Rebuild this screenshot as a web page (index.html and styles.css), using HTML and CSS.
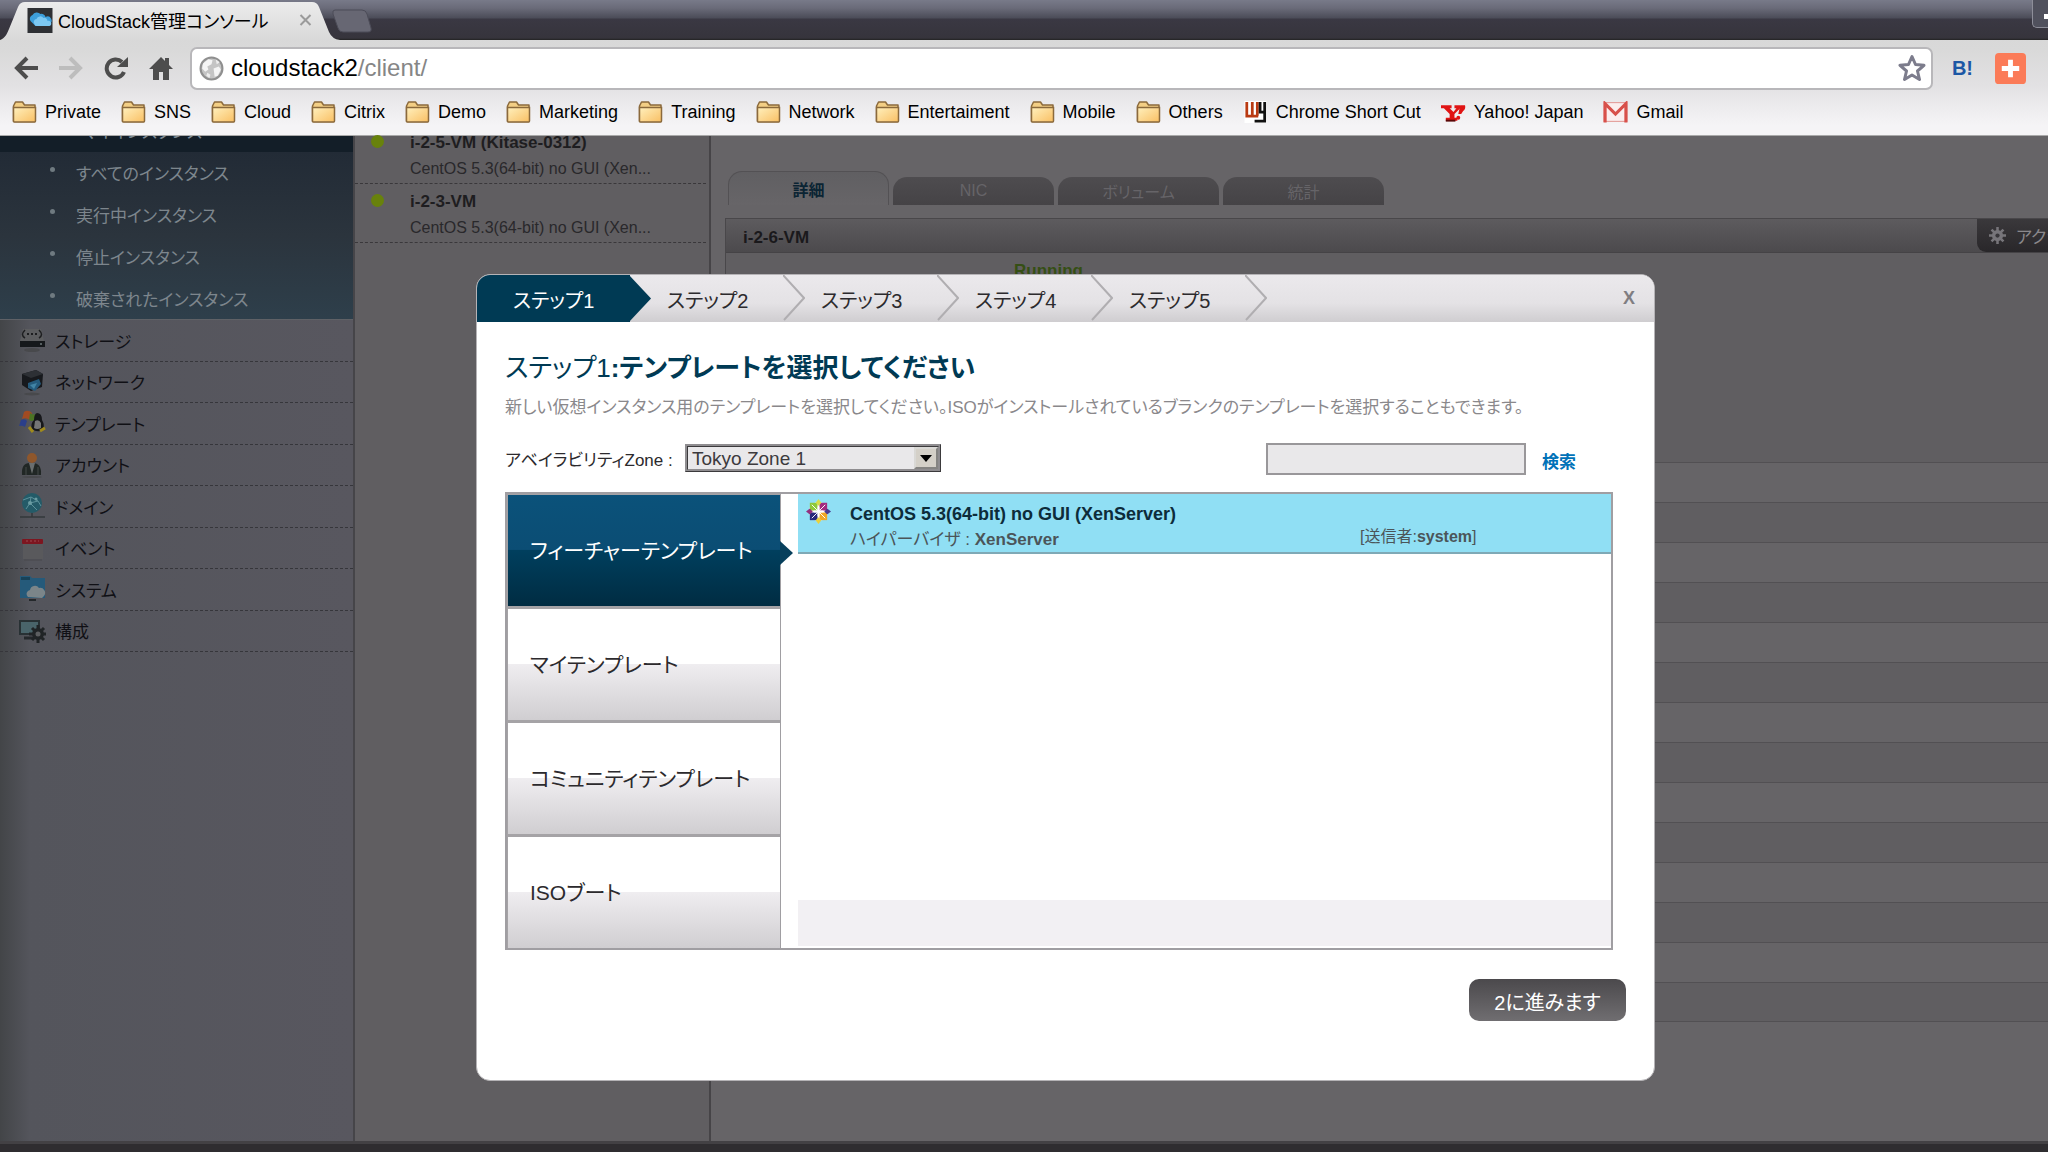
FILE: index.html
```
<!DOCTYPE html>
<html lang="ja">
<head>
    <meta charset="UTF-8">
    <meta name="viewport" content="width=device-width, initial-scale=1.0">
    <title>CloudStack管理コンソール</title>
    <link rel="stylesheet" href="styles.css">
</head>
<body>
    <!-- Shared icons -->
    <svg class="defs" width="0" height="0">
        <defs>
            <linearGradient id="folderFill" x1="0" y1="0" x2="1" y2="1">
                <stop offset="0" stop-color="#fff0bd"/>
                <stop offset="1" stop-color="#f9bf63"/>
            </linearGradient>
            <linearGradient id="tabFill" x1="0" y1="0" x2="0" y2="1">
                <stop offset="0" stop-color="#ececec"/>
                <stop offset="1" stop-color="#d9d9d9"/>
            </linearGradient>
            <symbol id="folder" viewBox="0 0 24 22">
                <path d="M1 20V5l2-4h7l2 3h10.500v16.500H1z" fill="#f3cf85" stroke="#8b6a3c" stroke-width="1.500" stroke-linejoin="round"/>
                <path d="M1 6.500h22V20a1 1 0 0 1-1 1H2a1 1 0 0 1-1-1z" fill="url(#folderFill)" stroke="#8b6a3c" stroke-width="1.500"/>
            </symbol>
        </defs>
    </svg>

    <div class="browser">
        <div class="title-bar">
            <div class="tab">
                <svg class="tab-shape" viewBox="0 0 340 40" preserveAspectRatio="none">
                    <path d="M0 40C5 38 7 34 9 29L18 7Q20 2 25 2H312Q317 2 319 7L329 32Q332 39 340 40z" fill="url(#tabFill)"/>
                </svg>
                <svg class="favicon" viewBox="0 0 25 25">
                    <rect width="25" height="25" fill="#2e3034"/>
                    <path d="M3 13a4 4 0 0 1 2-6 5 5 0 0 1 8-1 4 4 0 0 1 5 3 4 4 0 0 1 4 7l-6 2H8z" fill="#3d9fdb"/>
                    <path d="M7 16a3 3 0 0 1 2-5 4 4 0 0 1 7-1 3 3 0 0 1 4 3 2.500 2.500 0 0 1 2 5H9a2 2 0 0 1-2-2z" fill="#7cc8f2"/>
                </svg>
                <span class="tab-title">CloudStack管理コンソール</span>
                <button class="tab-close" aria-label="タブを閉じる">
                    <svg viewBox="0 0 12 12"><path d="M1 1l10 10M11 1L1 11" stroke="#9a9a9a" stroke-width="2"/></svg>
                </button>
            </div>
            <button class="new-tab" aria-label="新しいタブ">
                <svg viewBox="0 0 40 24"><path d="M3 1h27q4 0 5 4l4 14q1 4-3 4H11q-4 0-5-4L1 5q-1-4 2-4z" fill="#676773" stroke="#4c4c58"/></svg>
            </button>
            <button class="window-button" aria-label="最小化"></button>
        </div>

        <div class="toolbar">
            <div class="nav-buttons">
                <button aria-label="戻る">
                    <svg viewBox="0 0 24 24"><path d="M13 2L3 12l10 10M4 12h20" fill="none" stroke="#4d4d4d" stroke-width="4"/></svg>
                </button>
                <button aria-label="進む">
                    <svg viewBox="0 0 24 24"><path d="M11 2l10 10-10 10M0 12h20" fill="none" stroke="#bdbdbd" stroke-width="4"/></svg>
                </button>
                <button aria-label="再読み込み">
                    <svg viewBox="0 0 24 24"><path d="M20 16a9 9 0 1 1-2-10" fill="none" stroke="#4d4d4d" stroke-width="4"/><path d="M24 1v10H13z" fill="#4d4d4d"/></svg>
                </button>
                <button aria-label="ホーム">
                    <svg viewBox="0 0 24 24"><path d="M12 1L0 13h4v11h6v-8h4v8h6V13h4l-4-4V2h-4v3z" fill="#4d4d4d"/></svg>
                </button>
            </div>
            <div class="address-bar">
                <svg class="globe" viewBox="0 0 24 24">
                    <circle cx="12" cy="12" r="10.500" fill="#c4c4c4" stroke="#8f8f8f" stroke-width="2"/>
                    <path d="M4 7l5-4 4 1-1 4-4 2 1 3-3 2-3-3zM14 12l5-2 2 3-3 6-3 1z" fill="#f4f4f4"/>
                    <path d="M16 3l4 3-3 2zM8 16l3 2-1 3-3-2z" fill="#ededed"/>
                </svg>
                <span class="url">cloudstack2<span class="url-path">/client/</span></span>
                <svg class="star" viewBox="0 0 28 28">
                    <path d="M14 2.500l3.500 8 8.500.8-6.500 5.700 2 8.500-7.500-4.500-7.500 4.500 2-8.500L2 11.300l8.500-.8z" fill="#fff" stroke="#7c7c8c" stroke-width="3" stroke-linejoin="round"/>
                </svg>
            </div>
            <button class="ext-hatena" aria-label="はてなブックマーク">B!</button>
            <button class="ext-plus" aria-label="追加">
                <svg viewBox="0 0 32 32"><rect width="32" height="32" rx="4" fill="#fb7b58"/><path d="M16 7v18M7 16h18" stroke="#fff" stroke-width="5"/></svg>
            </button>
        </div>

        <div class="bookmarks">
            <a href="#"><svg><use href="#folder"/></svg>Private</a>
            <a href="#"><svg><use href="#folder"/></svg>SNS</a>
            <a href="#"><svg><use href="#folder"/></svg>Cloud</a>
            <a href="#"><svg><use href="#folder"/></svg>Citrix</a>
            <a href="#"><svg><use href="#folder"/></svg>Demo</a>
            <a href="#"><svg><use href="#folder"/></svg>Marketing</a>
            <a href="#"><svg><use href="#folder"/></svg>Training</a>
            <a href="#"><svg><use href="#folder"/></svg>Network</a>
            <a href="#"><svg><use href="#folder"/></svg>Entertaiment</a>
            <a href="#"><svg><use href="#folder"/></svg>Mobile</a>
            <a href="#"><svg><use href="#folder"/></svg>Others</a>
            <a href="#">
                <svg viewBox="0 0 24 24"><rect width="24" height="24" fill="#fff"/><path d="M2.500 1v15M8.500 1v15M14 1v15M1 16.500h14" fill="none" stroke="#b93a12" stroke-width="3"/><path d="M17 1v11h5M22 1v21H11" fill="none" stroke="#111" stroke-width="3"/></svg>Chrome Short Cut</a>
            <a href="#">
                <svg viewBox="0 0 26 22"><path d="M0 4h11v3H9l4 4 3-4h-2V4h6v3l-6 6v4h3v3H5v-3h4v-4L3 7H0z" fill="#e01414"/><path d="M5 20h10" stroke="#5a0808" stroke-width="2"/><path d="M20 4h5q1 4-2 6l-2 3h-3z" fill="#e01414"/><circle cx="18" cy="17" r="2" fill="#e01414"/></svg>Yahoo! Japan</a>
            <a href="#">
                <svg viewBox="0 0 24 20"><rect x="1" y="1" width="22" height="18" fill="#fbeeee" stroke="#e39a96"/><path d="M2 20V2l10 10L22 2v18" fill="none" stroke="#d8504a" stroke-width="3"/></svg>Gmail</a>
        </div>
    </div>

    <div class="console">
        <!-- Navigation -->
        <div class="sidebar">
            <div class="nav-current"><span>マイインスタンス</span></div>
            <ul class="sub-nav">
                <li><a href="#">すべてのインスタンス</a></li>
                <li><a href="#">実行中インスタンス</a></li>
                <li><a href="#">停止インスタンス</a></li>
                <li><a href="#">破棄されたインスタンス</a></li>
            </ul>
            <ul class="main-nav">
                <li><a href="#">
                    <svg viewBox="0 0 28 28"><path d="M5 3h18l3 12H2z" fill="#5c5d5f"/><path d="M7 4q-5 5 0 8M21 4q5 5 0 8" fill="none" stroke="#1d1e20" stroke-width="1.500"/><path d="M9 8h2M13 8h2M17 8h2" stroke="#1d1e20" stroke-width="2"/><rect x="2" y="15" width="25" height="6" fill="#15181b"/><circle cx="23" cy="18" r="1" fill="#6d777a"/><ellipse cx="14" cy="24" rx="8" ry="2" fill="#48494c"/></svg>
                    ストレージ</a></li>
                <li><a href="#">
                    <svg viewBox="0 0 28 28"><path d="M4 6l14-4 7 4-1 13-11 4-9-6z" fill="#17191d"/><path d="M4 6l9 4 12-4-7-4z" fill="#2d3035"/><path d="M10 15l11-4 2 5-6 7-7-3z" fill="#245a7c"/><path d="M12 17l7-2-3 6z" fill="#4184a6"/><ellipse cx="14" cy="26" rx="8" ry="1.500" fill="#48494c"/></svg>
                    ネットワーク</a></li>
                <li><a href="#">
                    <svg viewBox="0 0 28 28"><path d="M6 3q4-3 8 1l-2 7q-4-3-8-1z" fill="#a14b22"/><path d="M3 11q4-2 6 1l-2 6q-3-2-6-1z" fill="#2b3f8a"/><path d="M12 4q4 3 7 0l-2 7q-4 2-6 0z" fill="#4c7424"/><path d="M19 4q5 0 5 7 3 5 1 10-6 3-11-1-2-5 2-9 0-6 3-7z" fill="#17181b"/><path d="M17 12q4-2 6 2v5q-4 2-7 0z" fill="#747576"/><path d="M11 18l4 5M22 22l5-3" stroke="#a08a1c" stroke-width="3"/></svg>
                    テンプレート</a></li>
                <li><a href="#">
                    <svg viewBox="0 0 28 28"><path d="M4 24q-1-13 9-12 11-1 10 12z" fill="#212725"/><path d="M11 12l3 11 3-11z" fill="#6a6e6f"/><path d="M8 16v8M20 16v8" stroke="#444b48"/><circle cx="14" cy="7" r="5" fill="#8f572c"/><ellipse cx="14" cy="26" rx="10" ry="1" fill="#48494c"/></svg>
                    アカウント</a></li>
                <li><a href="#">
                    <svg viewBox="0 0 28 28"><circle cx="14" cy="11" r="10" fill="#245b68"/><path d="M5 8l8-3 7 4 3 5M8 17l4-6 8-2M13 5l-1 6 7 7" fill="none" stroke="#5c929b"/><circle cx="12" cy="11" r="2" fill="#6b9ca2"/><circle cx="18" cy="7" r="1.500" fill="#6b9ca2"/><path d="M14 21v4M2 25h25" stroke="#33383b" stroke-width="1.500"/></svg>
                    ドメイン</a></li>
                <li><a href="#">
                    <svg viewBox="0 0 28 28"><path d="M5 9h20v16H5z" fill="#59595c"/><rect x="4" y="5" width="21" height="5" rx="1" fill="#7d1620"/><path d="M8 7h13" stroke="#9a4a51" stroke-dasharray="2 2"/><path d="M6 26h18" stroke="#48494c"/></svg>
                    イベント</a></li>
                <li><a href="#">
                    <svg viewBox="0 0 28 28"><path d="M2 1h10l2 2h13v20H2z" fill="#255a7a"/><path d="M3 2h9v3H3z" fill="#184258"/><path d="M10 22a4 4 0 0 1 2-7 5 5 0 0 1 9-2 5 5 0 0 1 5 8l-2 2z" fill="#7b8589"/><path d="M11 25h7" stroke="#24282b" stroke-width="2"/></svg>
                    システム</a></li>
                <li><a href="#">
                    <svg viewBox="0 0 28 28"><path d="M1 3h21v15H1z" fill="#283134"/><path d="M3 5h17v11H3z" fill="#49646a"/><path d="M6 21h9" stroke="#24282b" stroke-width="3"/><circle cx="20" cy="17" r="6" fill="#202426"/><path d="M20 8v18M11 17h18M14 11l12 12M26 11L14 23" stroke="#202426" stroke-width="3"/><circle cx="20" cy="17" r="2.500" fill="#5c5e60"/></svg>
                    構成</a></li>
            </ul>
        </div>

        <!-- Instance list -->
        <div class="instances">
            <div class="instance instance-first">
                <span class="status"></span>
                <div class="instance-name">i-2-5-VM (Kitase-0312)</div>
                <div class="instance-os">CentOS 5.3(64-bit) no GUI (Xen...</div>
            </div>
            <div class="instance">
                <span class="status"></span>
                <div class="instance-name">i-2-3-VM</div>
                <div class="instance-os">CentOS 5.3(64-bit) no GUI (Xen...</div>
            </div>
        </div>

        <!-- Instance detail -->
        <div class="detail">
            <div class="detail-tabs">
                <button class="detail-tab active">詳細</button>
                <button class="detail-tab">NIC</button>
                <button class="detail-tab">ボリューム</button>
                <button class="detail-tab">統計</button>
            </div>
            <div class="detail-panel">
                <div class="detail-header">
                    <span class="detail-name">i-2-6-VM</span>
                    <button class="action-button">
                        <svg viewBox="0 0 20 20"><path d="M10 0v20M0 10h20M3 3l14 14M17 3L3 17" stroke="#77757a" stroke-width="3"/><circle cx="10" cy="10" r="6.500" fill="#77757a"/><circle cx="10" cy="10" r="2.500" fill="#38363a"/></svg>
                        <span>アクション</span>
                    </button>
                </div>
                <div class="detail-state">Running</div>
                <div class="detail-rows">
                    <div></div><div></div><div></div><div></div><div></div><div></div><div></div>
                    <div></div><div></div><div></div><div></div><div></div><div></div><div></div>
                </div>
            </div>
        </div>

        <!-- Wizard -->
        <div class="wizard" role="dialog" aria-labelledby="wizard-title">
            <div class="wizard-header">
                <ol class="steps">
                    <li class="active">ステップ1<svg viewBox="0 0 22 47"><path d="M0 0l22 23.500L0 47z" fill="#003a54"/></svg></li>
                    <li>ステップ2<svg viewBox="0 0 22 47"><path d="M0 0l21 23L1 45" fill="none" stroke="#b0aeb1" stroke-width="2"/></svg></li>
                    <li>ステップ3<svg viewBox="0 0 22 47"><path d="M0 0l21 23L1 45" fill="none" stroke="#b0aeb1" stroke-width="2"/></svg></li>
                    <li>ステップ4<svg viewBox="0 0 22 47"><path d="M0 0l21 23L1 45" fill="none" stroke="#b0aeb1" stroke-width="2"/></svg></li>
                    <li>ステップ5<svg viewBox="0 0 22 47"><path d="M0 0l21 23L1 45" fill="none" stroke="#b0aeb1" stroke-width="2"/></svg></li>
                </ol>
                <button class="wizard-close" aria-label="閉じる">X</button>
            </div>
            <div class="wizard-body">
                <h1 id="wizard-title"><span>ステップ1</span>:テンプレートを選択してください</h1>
                <p class="description">新しい仮想インスタンス用のテンプレートを選択してください。ISOがインストールされているブランクのテンプレートを選択することもできます。</p>

                <div class="filters">
                    <label for="zone">アベイラビリティZone :</label>
                    <div class="select-box">
                        <select id="zone">
                            <option>Tokyo Zone 1</option>
                        </select>
                        <span class="select-arrow"></span>
                    </div>
                    <input type="text" class="search-input" aria-label="検索">
                    <a href="#" class="search-link">検索</a>
                </div>

                <div class="template-box">
                    <div class="template-tabs">
                        <button class="active">フィーチャーテンプレート</button>
                        <button>マイテンプレート</button>
                        <button>コミュニティテンプレート</button>
                        <button>ISOブート</button>
                    </div>
                    <div class="template-list">
                        <div class="template">
                            <svg class="centos" viewBox="0 0 26 26">
                                <circle cx="13" cy="13" r="10" fill="#fff"/>
                                <path d="M4 4h8v8H4z" fill="#8fc93a"/>
                                <path d="M14 4h8v8h-8z" fill="#a32a7f"/>
                                <path d="M4 14h8v8H4z" fill="#2b2a7c"/>
                                <path d="M14 14h8v8h-8z" fill="#efa724"/>
                                <path d="M13 0l3 4-3 3-3-3z" fill="#d6dd4a"/>
                                <path d="M26 13l-4 3-3-3 3-3z" fill="#4b3b90"/>
                                <path d="M13 26l-3-4 3-3 3 3z" fill="#e9d13c"/>
                                <path d="M0 13l4-3 3 3-3 3z" fill="#93317f"/>
                                <path d="M6 6l14 14M20 6L6 20" stroke="#fff"/>
                                <path d="M13 8v10M8 13h10" stroke="#fff" stroke-width="2"/>
                            </svg>
                            <div class="template-info">
                                <div class="template-name">CentOS 5.3(64-bit) no GUI (XenServer)</div>
                                <div class="template-meta">ハイパーバイザ : <b>XenServer</b></div>
                            </div>
                            <div class="template-owner">[送信者:<b>system</b>]</div>
                        </div>
                        <div class="list-footer"></div>
                    </div>
                </div>

                <div class="wizard-actions">
                    <button class="next-button">2に進みます</button>
                </div>
            </div>
        </div>
    </div>
    <div class="bottom-bar"></div>
</body>
</html>
```
FILE: styles.css
```
* {
    box-sizing: border-box;
}

body {
    margin: 0;
    height: 100vh;
    display: flex;
    flex-direction: column;
    overflow: hidden;
    font-family: "Liberation Sans", "Noto Sans CJK JP", sans-serif;
    font-size: 17px;
    font-feature-settings: "palt";
    background: #666467;
}

button {
    margin: 0;
    padding: 0;
    border: none;
    background: none;
    font: inherit;
    font-feature-settings: inherit;
    cursor: pointer;
}

svg {
    display: block;
    flex: none;
}

ul,
ol {
    margin: 0;
    padding: 0;
    list-style: none;
}

a {
    color: inherit;
    text-decoration: none;
}

.defs {
    position: absolute;
}

/* Browser frame */
.browser {
    flex: none;
    background: linear-gradient(#d5d5d5, #d9d9d9 50px, #e2e1e3 85px, #f5f4f6 125px);
    border-bottom: 1px solid #a9a9a9;
}

.title-bar {
    display: flex;
    align-items: flex-start;
    height: 40px;
    overflow: hidden;
    background: linear-gradient(#787a89, #6a6b79 8px, #4b4c58 18px, #3a3843 19px, #36343c 38px, #222 40px);
}

.tab {
    position: relative;
    display: flex;
    align-items: center;
    width: 340px;
    height: 40px;
    padding-left: 27px;
}

.tab-shape {
    position: absolute;
    left: 0;
    top: 0;
    width: 340px;
    height: 40px;
}

.favicon {
    position: relative;
    width: 26px;
    height: 25px;
    margin-right: 5px;
}

.tab-title {
    position: relative;
    flex: 1;
    font-size: 18px;
    white-space: nowrap;
}

.tab-close {
    position: relative;
    margin-right: 28px;
}

.tab-close svg {
    width: 13px;
    height: 12px;
}

.new-tab {
    margin: 9px 0 0 -8px;
}

.new-tab svg {
    position: relative;
    width: 40px;
    height: 24px;
}

.window-button {
    width: 16px;
    height: 28px;
    margin-left: auto;
    border: solid #8d8e99;
    border-width: 0 0 1px 1px;
    border-radius: 0 0 0 5px;
    background: linear-gradient(#fff, #fff) 11px 14px / 8px 5px no-repeat, #50515d;
}

.toolbar {
    display: flex;
    align-items: center;
    height: 51px;
    padding: 5px 22px 0 14px;
}

.nav-buttons {
    display: flex;
    gap: 21px;
    width: 176px;
}

.nav-buttons svg {
    width: 24px;
    height: 24px;
}

.address-bar {
    display: flex;
    align-items: center;
    flex: 1;
    height: 43px;
    padding: 0 5px 0 7px;
    border: 2px solid #b8b7ba;
    border-radius: 7px;
    background: #fff;
}

.globe {
    width: 25px;
    height: 25px;
}

.url {
    flex: 1;
    margin-left: 7px;
    font-size: 24px;
}

.url-path {
    color: #868686;
}

.star {
    width: 28px;
    height: 28px;
}

.ext-hatena {
    margin: 0 22px 0 19px;
    font-size: 20px;
    font-weight: bold;
    color: #1c57a5;
}

.ext-plus svg {
    width: 31px;
    height: 31px;
}

.bookmarks {
    display: flex;
    align-items: center;
    gap: 20px;
    height: 44px;
    padding: 0 12px 2px;
    font-size: 18px;
    white-space: nowrap;
}

.bookmarks a {
    display: flex;
    align-items: center;
    gap: 8px;
}

.bookmarks svg {
    width: 25px;
    height: 22px;
}

/* Console behind the wizard */
.console {
    position: relative;
    display: flex;
    flex: 1;
    min-height: 0;
}

.sidebar {
    width: 355px;
    border-right: 2px solid #464549;
    background: linear-gradient(90deg, #434548, #54555c 30px, #58575f);
}

.nav-current {
    display: flex;
    align-items: flex-end;
    height: 16px;
    padding: 0 0 9px 82px;
    overflow: hidden;
    line-height: 20px;
    color: #7e8b95;
    background: #131e28;
}

.sub-nav {
    display: grid;
    grid-template-rows: repeat(4, 1fr);
    height: 168px;
    border-bottom: 1px solid #5f6166;
    background: linear-gradient(#222b36, #2b343d 50%, #2e3f4b);
    color: #7d868d;
}

.sub-nav li {
    display: flex;
    align-items: center;
}

.sub-nav li::before {
    content: "";
    width: 5px;
    height: 5px;
    margin: 0 21px 6px 50px;
    border-radius: 50%;
    background: #6f7a80;
}

.main-nav {
    display: grid;
    grid-template-rows: repeat(8, 1fr);
    height: 332px;
    color: #101015;
}

.main-nav li {
    border-bottom: 1px dashed #36363b;
}

.main-nav a {
    display: flex;
    align-items: center;
    gap: 9px;
    height: 100%;
    padding-left: 18px;
}

.main-nav svg {
    width: 28px;
    height: 28px;
}

.instances {
    width: 356px;
    border-right: 2px solid #464447;
    background: #605e61;
}

.instance {
    position: relative;
    display: flex;
    flex-direction: column;
    justify-content: flex-end;
    height: 59px;
    margin-right: 3px;
    padding: 0 0 4px 55px;
    border-bottom: 1px dashed #3a383b;
    line-height: 20px;
}

.instance-first {
    height: 48px;
}

.instance-name {
    margin-bottom: 6px;
    font-weight: bold;
    color: #1e1d20;
}

.instance-os {
    font-size: 16px;
    color: #29282b;
}

.status {
    position: absolute;
    left: 16px;
    bottom: 35px;
    width: 13px;
    height: 13px;
    border-radius: 50%;
    background: #68820c;
}

.detail {
    flex: 1;
    min-width: 0;
    padding: 35px 0 0 14px;
    background: #666467;
}

.detail-tabs {
    display: flex;
    align-items: flex-end;
    gap: 4px;
    height: 34px;
    padding-left: 3px;
}

.detail-tab {
    width: 161px;
    height: 28px;
    border-radius: 14px 14px 0 0;
    background: linear-gradient(#4e4c4f, #454346);
    font-size: 16px;
    color: #666468;
}

.detail-tab.active {
    height: 34px;
    border: 1px solid #535154;
    border-bottom: none;
    background: linear-gradient(#605f62, #676568);
    font-weight: bold;
    color: #0b2433;
}

.detail-panel {
    margin-top: 13px;
    border: solid #49474a;
    border-width: 1px 0 0 1px;
    background: #605e61;
}

.detail-header {
    display: flex;
    justify-content: space-between;
    align-items: center;
    height: 34px;
    padding-left: 17px;
    border-bottom: 1px solid #454346;
    background: linear-gradient(#5d5b5e, #4c4a4d);
}

.detail-name {
    margin-top: 4px;
    font-weight: bold;
    color: #1a191c;
}

.action-button {
    display: flex;
    align-items: center;
    gap: 10px;
    width: 71px;
    height: 33px;
    padding-left: 12px;
    overflow: hidden;
    border-radius: 0 0 0 9px;
    background: linear-gradient(#3a383b, #29272a);
    color: #8a888c;
    white-space: nowrap;
}

.action-button svg {
    width: 17px;
    height: 17px;
}

.detail-state {
    height: 209px;
    padding: 8px 0 0 288px;
    line-height: 20px;
    font-weight: bold;
    color: #354f14;
}

.detail-rows div {
    height: 40px;
    border-top: 1px solid #525053;
}

.detail-rows div:nth-child(odd) {
    background: #666467;
}

.detail-rows div:last-child {
    border-bottom: 1px solid #525053;
}

.bottom-bar {
    flex: none;
    height: 11px;
    border-top: 3px solid #434144;
    background: #2f2d30;
}

/* Wizard */
.wizard {
    position: absolute;
    left: 476px;
    right: 393px;
    top: 138px;
    overflow: hidden;
    border: 1px solid #b5b3b6;
    border-radius: 14px;
    background: #fff;
}

.wizard-header {
    display: flex;
    justify-content: space-between;
    align-items: center;
    height: 47px;
    background: linear-gradient(#ebe9ec, #e4e2e5 60%, #cfcdd0);
}

.steps {
    display: flex;
}

.steps li {
    position: relative;
    width: 154px;
    height: 47px;
    padding-left: 36px;
    line-height: 52px;
    font-size: 20px;
    color: #2c2a2d;
}

.steps svg {
    position: absolute;
    left: 152px;
    top: 0;
    z-index: 1;
    width: 22px;
    height: 47px;
}

.steps .active {
    background: linear-gradient(90deg, #003a54 153px, transparent 153px);
    color: #fff;
}

.wizard-close {
    margin-right: 19px;
    font-size: 18px;
    font-weight: bold;
    color: #807e82;
}

.wizard-body {
    padding: 28px 28px 59px;
}

h1 {
    margin: 0;
    font-size: 26px;
    line-height: 36px;
    font-weight: bold;
    color: #003a54;
}

h1 span {
    font-weight: normal;
}

.description {
    margin: 10px 0 0;
    font-size: 17px;
    line-height: 24px;
    white-space: nowrap;
    color: #8a888b;
}

.filters {
    display: flex;
    align-items: center;
    height: 34px;
    margin: 21px 13px 0 0;
}

.filters label {
    width: 180px;
    color: #2c2a2d;
}

.select-box {
    position: relative;
    width: 256px;
    height: 28px;
}

.select-box select {
    width: 100%;
    height: 100%;
    padding: 0 30px 0 4px;
    appearance: none;
    border: 3px ridge #8f8d90;
    border-radius: 0;
    background: #e9e8ea;
    font: 19px "Liberation Sans", sans-serif;
    color: #3c3a3d;
}

.select-arrow {
    position: absolute;
    right: 3px;
    top: 3px;
    width: 24px;
    height: 22px;
    border: 2px outset #d9d8d5;
    background: #d4d0c8;
    pointer-events: none;
}

.select-arrow::after {
    content: "";
    position: absolute;
    left: 4px;
    top: 6px;
    border: solid transparent;
    border-width: 7px 6px 0;
    border-top-color: #000;
}

.search-input {
    width: 260px;
    height: 32px;
    margin: 2px 0 0 auto;
    border: 2px solid #99979a;
    background: #e9e8ea;
}

.search-link {
    margin: 5px 37px 0 16px;
    font-weight: bold;
    color: #0072b8;
}

.template-box {
    display: flex;
    height: 458px;
    margin: 17px 13px 0 0;
    border: 2px solid #a09ea2;
}

.template-tabs {
    display: grid;
    grid-template-rows: repeat(4, 1fr);
    gap: 3px;
    width: 274px;
    padding: 1px 0 0 1px;
    border-right: 1px solid #a09ea2;
    background: #a5a3a6;
}

.template-tabs button {
    position: relative;
    padding: 0 0 3px 22px;
    background: linear-gradient(#fff 50%, #efedf0 50%, #d0ced1);
    font-size: 21px;
    text-align: left;
    color: #2c2a2d;
}

.template-tabs .active {
    background: linear-gradient(#0b527a, #0b4d74 49%, #003f5e 50%, #002c42);
    color: #fff;
}

.template-tabs .active::after {
    content: "";
    position: absolute;
    left: 100%;
    top: 46px;
    border: solid transparent;
    border-width: 12px 0 12px 13px;
    border-left-color: #073f5c;
}

.template-list {
    display: flex;
    flex: 1;
    flex-direction: column;
    justify-content: space-between;
    padding: 0 0 2px 17px;
}

.template {
    display: flex;
    height: 60px;
    padding: 5px 0 0 8px;
    border-bottom: 2px solid #7fa9b6;
    background: #90dff4;
}

.centos {
    width: 25px;
    height: 25px;
    margin-right: 19px;
}

.template-info {
    width: 510px;
    padding-top: 5px;
    line-height: 20px;
}

.template-name {
    font-size: 18px;
    font-weight: bold;
    color: #0d2c3a;
}

.template-meta {
    margin-top: 6px;
    color: #4b5559;
}

.template-owner {
    padding-top: 28px;
    line-height: 20px;
    font-size: 16px;
    color: #4b5559;
}

.list-footer {
    height: 46px;
    background: #f2f0f3;
}

.wizard-actions {
    display: flex;
    justify-content: flex-end;
    margin-top: 29px;
}

.next-button {
    width: 157px;
    height: 42px;
    padding-top: 3px;
    border-radius: 10px;
    background: linear-gradient(#4b494c, #706e71);
    font-size: 20px;
    color: #fff;
}
```
